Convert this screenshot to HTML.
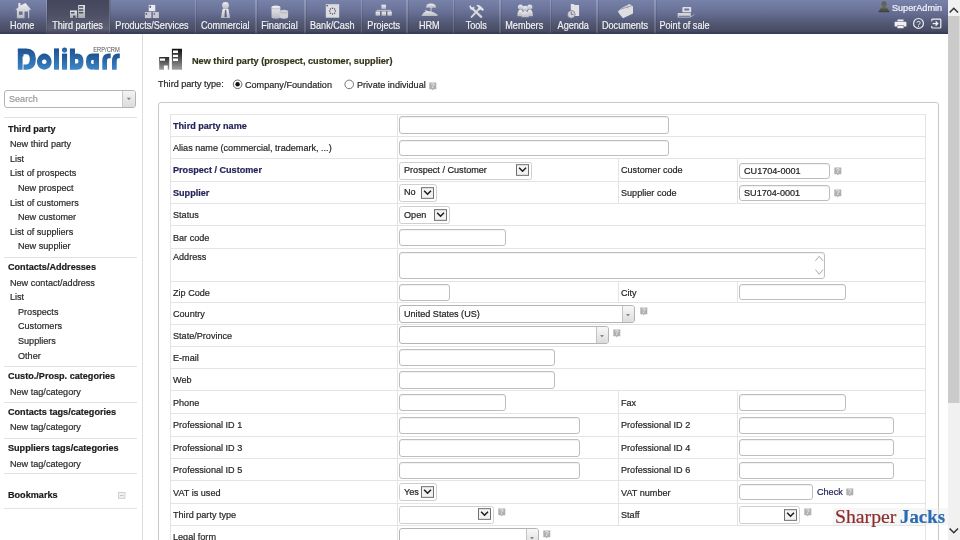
<!DOCTYPE html><html><head><meta charset="utf-8"><style>
html,body{margin:0;padding:0;width:960px;height:540px;overflow:hidden;background:#fff;}
body{position:relative;font-family:"Liberation Sans",sans-serif;color:#222;}
.t{position:absolute;white-space:nowrap;line-height:1;-webkit-text-stroke:0.2px currentColor;will-change:transform;transform:scaleY(1.05);}
.b{position:absolute;box-sizing:border-box;}
svg{position:absolute;overflow:visible;}
</style></head><body>
<div class="b" style="left:0px;top:0px;width:948.00px;height:33.60px;background:linear-gradient(#7882a8 0%,#687096 35%,#565c7a 62%,#4c5169 82%,#474c64 91%,#3c3f58 95%,#383b55 100%);"></div>
<div class="b" style="left:46.5px;top:0px;width:63.00px;height:33.60px;background:linear-gradient(#44475c 0%,#4e5166 45%,#5e6174 85%,#4a4c62 94%,#3c3e58 100%);"></div>
<div class="t" style="left:-0.8px;width:46.5px;text-align:center;top:21.50px;font-size:9.1px;color:#f4f4f8;transform-origin:0 7.70px;transform:scaleY(1.12);text-shadow:0 0.5px 0.8px rgba(0,0,0,0.45);">Home</div>
<div class="b" style="left:45.9px;top:0px;width:1.20px;height:33.00px;background:linear-gradient(rgba(255,255,255,0.2),rgba(255,255,255,0.14));"></div>
<div class="b" style="left:47.1px;top:0px;width:0.80px;height:33.00px;background:rgba(30,34,60,0.12);"></div>
<div class="t" style="left:45.7px;width:63.0px;text-align:center;top:21.50px;font-size:9.1px;color:#f4f4f8;transform-origin:0 7.70px;transform:scaleY(1.12);text-shadow:0 0.5px 0.8px rgba(0,0,0,0.45);">Third parties</div>
<div class="b" style="left:108.9px;top:0px;width:1.20px;height:33.00px;background:linear-gradient(rgba(255,255,255,0.2),rgba(255,255,255,0.14));"></div>
<div class="b" style="left:110.1px;top:0px;width:0.80px;height:33.00px;background:rgba(30,34,60,0.12);"></div>
<div class="t" style="left:108.7px;width:86.0px;text-align:center;top:21.50px;font-size:9.1px;color:#f4f4f8;transform-origin:0 7.70px;transform:scaleY(1.12);text-shadow:0 0.5px 0.8px rgba(0,0,0,0.45);">Products/Services</div>
<div class="b" style="left:194.9px;top:0px;width:1.20px;height:33.00px;background:linear-gradient(rgba(255,255,255,0.2),rgba(255,255,255,0.14));"></div>
<div class="b" style="left:196.1px;top:0px;width:0.80px;height:33.00px;background:rgba(30,34,60,0.12);"></div>
<div class="t" style="left:194.7px;width:60.5px;text-align:center;top:21.50px;font-size:9.1px;color:#f4f4f8;transform-origin:0 7.70px;transform:scaleY(1.12);text-shadow:0 0.5px 0.8px rgba(0,0,0,0.45);">Commercial</div>
<div class="b" style="left:255.4px;top:0px;width:1.20px;height:33.00px;background:linear-gradient(rgba(255,255,255,0.2),rgba(255,255,255,0.14));"></div>
<div class="b" style="left:256.6px;top:0px;width:0.80px;height:33.00px;background:rgba(30,34,60,0.12);"></div>
<div class="t" style="left:255.2px;width:49px;text-align:center;top:21.50px;font-size:9.1px;color:#f4f4f8;transform-origin:0 7.70px;transform:scaleY(1.12);text-shadow:0 0.5px 0.8px rgba(0,0,0,0.45);">Financial</div>
<div class="b" style="left:304.4px;top:0px;width:1.20px;height:33.00px;background:linear-gradient(rgba(255,255,255,0.2),rgba(255,255,255,0.14));"></div>
<div class="b" style="left:305.6px;top:0px;width:0.80px;height:33.00px;background:rgba(30,34,60,0.12);"></div>
<div class="t" style="left:304.2px;width:56.5px;text-align:center;top:21.50px;font-size:9.1px;color:#f4f4f8;transform-origin:0 7.70px;transform:scaleY(1.12);text-shadow:0 0.5px 0.8px rgba(0,0,0,0.45);">Bank/Cash</div>
<div class="b" style="left:360.9px;top:0px;width:1.20px;height:33.00px;background:linear-gradient(rgba(255,255,255,0.2),rgba(255,255,255,0.14));"></div>
<div class="b" style="left:362.1px;top:0px;width:0.80px;height:33.00px;background:rgba(30,34,60,0.12);"></div>
<div class="t" style="left:360.7px;width:45.5px;text-align:center;top:21.50px;font-size:9.1px;color:#f4f4f8;transform-origin:0 7.70px;transform:scaleY(1.12);text-shadow:0 0.5px 0.8px rgba(0,0,0,0.45);">Projects</div>
<div class="b" style="left:406.4px;top:0px;width:1.20px;height:33.00px;background:linear-gradient(rgba(255,255,255,0.2),rgba(255,255,255,0.14));"></div>
<div class="b" style="left:407.6px;top:0px;width:0.80px;height:33.00px;background:rgba(30,34,60,0.12);"></div>
<div class="t" style="left:406.2px;width:46.5px;text-align:center;top:21.50px;font-size:9.1px;color:#f4f4f8;transform-origin:0 7.70px;transform:scaleY(1.12);text-shadow:0 0.5px 0.8px rgba(0,0,0,0.45);">HRM</div>
<div class="b" style="left:452.9px;top:0px;width:1.20px;height:33.00px;background:linear-gradient(rgba(255,255,255,0.2),rgba(255,255,255,0.14));"></div>
<div class="b" style="left:454.1px;top:0px;width:0.80px;height:33.00px;background:rgba(30,34,60,0.12);"></div>
<div class="t" style="left:452.7px;width:46.5px;text-align:center;top:21.50px;font-size:9.1px;color:#f4f4f8;transform-origin:0 7.70px;transform:scaleY(1.12);text-shadow:0 0.5px 0.8px rgba(0,0,0,0.45);">Tools</div>
<div class="b" style="left:499.4px;top:0px;width:1.20px;height:33.00px;background:linear-gradient(rgba(255,255,255,0.2),rgba(255,255,255,0.14));"></div>
<div class="b" style="left:500.6px;top:0px;width:0.80px;height:33.00px;background:rgba(30,34,60,0.12);"></div>
<div class="t" style="left:499.2px;width:50.5px;text-align:center;top:21.50px;font-size:9.1px;color:#f4f4f8;transform-origin:0 7.70px;transform:scaleY(1.12);text-shadow:0 0.5px 0.8px rgba(0,0,0,0.45);">Members</div>
<div class="b" style="left:549.9px;top:0px;width:1.20px;height:33.00px;background:linear-gradient(rgba(255,255,255,0.2),rgba(255,255,255,0.14));"></div>
<div class="b" style="left:551.1px;top:0px;width:0.80px;height:33.00px;background:rgba(30,34,60,0.12);"></div>
<div class="t" style="left:549.7px;width:46.5px;text-align:center;top:21.50px;font-size:9.1px;color:#f4f4f8;transform-origin:0 7.70px;transform:scaleY(1.12);text-shadow:0 0.5px 0.8px rgba(0,0,0,0.45);">Agenda</div>
<div class="b" style="left:596.4px;top:0px;width:1.20px;height:33.00px;background:linear-gradient(rgba(255,255,255,0.2),rgba(255,255,255,0.14));"></div>
<div class="b" style="left:597.6px;top:0px;width:0.80px;height:33.00px;background:rgba(30,34,60,0.12);"></div>
<div class="t" style="left:596.2px;width:58px;text-align:center;top:21.50px;font-size:9.1px;color:#f4f4f8;transform-origin:0 7.70px;transform:scaleY(1.12);text-shadow:0 0.5px 0.8px rgba(0,0,0,0.45);">Documents</div>
<div class="b" style="left:654.4px;top:0px;width:1.20px;height:33.00px;background:linear-gradient(rgba(255,255,255,0.2),rgba(255,255,255,0.14));"></div>
<div class="b" style="left:655.6px;top:0px;width:0.80px;height:33.00px;background:rgba(30,34,60,0.12);"></div>
<div class="t" style="left:654.2px;width:61px;text-align:center;top:21.50px;font-size:9.1px;color:#f4f4f8;transform-origin:0 7.70px;transform:scaleY(1.12);text-shadow:0 0.5px 0.8px rgba(0,0,0,0.45);">Point of sale</div>
<div class="t " style="left:892px;top:3.50px;font-size:9.1px;transform-origin:0 7.70px;color:#f4f4f8;">SuperAdmin</div>
<div class="b" style="left:948px;top:0px;width:12.00px;height:540.00px;background:#f1f1f1;"></div>
<div class="b" style="left:948px;top:16px;width:10.60px;height:387.00px;background:#cbcbcb;"></div>
<div class="b" style="left:958.6px;top:16px;width:1.40px;height:387.00px;background:#dcdcdc;"></div>
<div class="b" style="left:141.6px;top:34px;width:1.00px;height:506.00px;background:#dcdcdc;"></div>
<div class="b" style="left:4px;top:90.3px;width:132.00px;height:17.40px;border:1px solid #b4b4b4;border-radius:3px;background:#fff;"></div>
<div class="b" style="left:122px;top:91.3px;width:13.00px;height:15.40px;background:linear-gradient(#f4f4f4,#dcdcdc);border-left:1px solid #c8c8c8;border-radius:0 2px 2px 0;"></div>
<div class="t " style="left:8.5px;top:94.80px;font-size:9.1px;transform-origin:0 7.70px;color:#9a9a9a;">Search</div>
<svg style="left:126px;top:97px" width="6" height="4"><path d="M0.8 0.8 L5 0.8 L2.9 3.2 Z" fill="#888"/></svg>
<div class="b" style="left:4px;top:117.0px;width:133.00px;height:1.00px;background:#e2e2e2;"></div>
<div class="b" style="left:4px;top:256.5px;width:133.00px;height:1.00px;background:#e2e2e2;"></div>
<div class="b" style="left:4px;top:366.2px;width:133.00px;height:1.00px;background:#e2e2e2;"></div>
<div class="b" style="left:4px;top:402.0px;width:133.00px;height:1.00px;background:#e2e2e2;"></div>
<div class="b" style="left:4px;top:437.5px;width:133.00px;height:1.00px;background:#e2e2e2;"></div>
<div class="b" style="left:4px;top:473.2px;width:133.00px;height:1.00px;background:#e2e2e2;"></div>
<div class="b" style="left:4px;top:508.0px;width:133.00px;height:1.00px;background:#e2e2e2;"></div>
<div class="t " style="left:8px;top:124.50px;font-size:9.1px;transform-origin:0 7.70px;color:#1a1a1a;font-weight:bold;">Third party</div>
<div class="t " style="left:10px;top:139.50px;font-size:9.1px;transform-origin:0 7.70px;color:#2a2a2a;">New third party</div>
<div class="t " style="left:10px;top:154.50px;font-size:9.1px;transform-origin:0 7.70px;color:#2a2a2a;">List</div>
<div class="t " style="left:10px;top:169.00px;font-size:9.1px;transform-origin:0 7.70px;color:#2a2a2a;">List of prospects</div>
<div class="t " style="left:18px;top:183.80px;font-size:9.1px;transform-origin:0 7.70px;color:#2a2a2a;">New prospect</div>
<div class="t " style="left:10px;top:198.60px;font-size:9.1px;transform-origin:0 7.70px;color:#2a2a2a;">List of customers</div>
<div class="t " style="left:18px;top:213.10px;font-size:9.1px;transform-origin:0 7.70px;color:#2a2a2a;">New customer</div>
<div class="t " style="left:10px;top:227.80px;font-size:9.1px;transform-origin:0 7.70px;color:#2a2a2a;">List of suppliers</div>
<div class="t " style="left:18px;top:242.30px;font-size:9.1px;transform-origin:0 7.70px;color:#2a2a2a;">New supplier</div>
<div class="t " style="left:7.5px;top:263.10px;font-size:9.1px;transform-origin:0 7.70px;color:#1a1a1a;font-weight:bold;">Contacts/Addresses</div>
<div class="t " style="left:10px;top:278.60px;font-size:9.1px;transform-origin:0 7.70px;color:#2a2a2a;">New contact/address</div>
<div class="t " style="left:10px;top:293.10px;font-size:9.1px;transform-origin:0 7.70px;color:#2a2a2a;">List</div>
<div class="t " style="left:18px;top:307.80px;font-size:9.1px;transform-origin:0 7.70px;color:#2a2a2a;">Prospects</div>
<div class="t " style="left:18px;top:322.30px;font-size:9.1px;transform-origin:0 7.70px;color:#2a2a2a;">Customers</div>
<div class="t " style="left:18px;top:337.00px;font-size:9.1px;transform-origin:0 7.70px;color:#2a2a2a;">Suppliers</div>
<div class="t " style="left:18px;top:351.50px;font-size:9.1px;transform-origin:0 7.70px;color:#2a2a2a;">Other</div>
<div class="t " style="left:7.5px;top:372.30px;font-size:9.1px;transform-origin:0 7.70px;color:#1a1a1a;font-weight:bold;">Custo./Prosp. categories</div>
<div class="t " style="left:10px;top:387.80px;font-size:9.1px;transform-origin:0 7.70px;color:#2a2a2a;">New tag/category</div>
<div class="t " style="left:7.5px;top:408.10px;font-size:9.1px;transform-origin:0 7.70px;color:#1a1a1a;font-weight:bold;">Contacts tags/categories</div>
<div class="t " style="left:10px;top:423.10px;font-size:9.1px;transform-origin:0 7.70px;color:#2a2a2a;">New tag/category</div>
<div class="t " style="left:7.5px;top:443.80px;font-size:9.1px;transform-origin:0 7.70px;color:#1a1a1a;font-weight:bold;">Suppliers tags/categories</div>
<div class="t " style="left:10px;top:459.70px;font-size:9.1px;transform-origin:0 7.70px;color:#2a2a2a;">New tag/category</div>
<div class="t " style="left:7.5px;top:490.60px;font-size:9.1px;transform-origin:0 7.70px;color:#1a1a1a;font-weight:bold;">Bookmarks</div>
<div class="t " style="left:191.9px;top:57.44px;font-size:9.17px;transform-origin:0 7.76px;color:#34341a;font-weight:bold;">New third party (prospect, customer, supplier)</div>
<div class="t " style="left:158px;top:80.30px;font-size:9.1px;transform-origin:0 7.70px;color:#262626;">Third party type:</div>
<div class="t " style="left:245.1px;top:80.70px;font-size:9.1px;transform-origin:0 7.70px;color:#262626;">Company/Foundation</div>
<div class="t " style="left:356.6px;top:80.80px;font-size:9.1px;transform-origin:0 7.70px;color:#262626;">Private individual</div>
<div class="b" style="left:157.5px;top:102.1px;width:781.60px;height:457.90px;border:1px solid #c8c8c8;border-radius:3px;"></div>
<div class="b" style="left:170.0px;top:113.7px;width:755.80px;height:1.00px;background:#e4e4e4;"></div>
<div class="b" style="left:170.0px;top:135.9px;width:755.80px;height:1.00px;background:#e4e4e4;"></div>
<div class="b" style="left:170.0px;top:158.1px;width:755.80px;height:1.00px;background:#e4e4e4;"></div>
<div class="b" style="left:170.0px;top:180.5px;width:755.80px;height:1.00px;background:#e4e4e4;"></div>
<div class="b" style="left:170.0px;top:203.0px;width:755.80px;height:1.00px;background:#e4e4e4;"></div>
<div class="b" style="left:170.0px;top:225.3px;width:755.80px;height:1.00px;background:#e4e4e4;"></div>
<div class="b" style="left:170.0px;top:248.0px;width:755.80px;height:1.00px;background:#e4e4e4;"></div>
<div class="b" style="left:170.0px;top:281.2px;width:755.80px;height:1.00px;background:#e4e4e4;"></div>
<div class="b" style="left:170.0px;top:302.2px;width:755.80px;height:1.00px;background:#e4e4e4;"></div>
<div class="b" style="left:170.0px;top:323.9px;width:755.80px;height:1.00px;background:#e4e4e4;"></div>
<div class="b" style="left:170.0px;top:346.0px;width:755.80px;height:1.00px;background:#e4e4e4;"></div>
<div class="b" style="left:170.0px;top:367.9px;width:755.80px;height:1.00px;background:#e4e4e4;"></div>
<div class="b" style="left:170.0px;top:390.2px;width:755.80px;height:1.00px;background:#e4e4e4;"></div>
<div class="b" style="left:170.0px;top:412.6px;width:755.80px;height:1.00px;background:#e4e4e4;"></div>
<div class="b" style="left:170.0px;top:435.5px;width:755.80px;height:1.00px;background:#e4e4e4;"></div>
<div class="b" style="left:170.0px;top:458.2px;width:755.80px;height:1.00px;background:#e4e4e4;"></div>
<div class="b" style="left:170.0px;top:480.4px;width:755.80px;height:1.00px;background:#e4e4e4;"></div>
<div class="b" style="left:170.0px;top:502.5px;width:755.80px;height:1.00px;background:#e4e4e4;"></div>
<div class="b" style="left:170.0px;top:524.8px;width:755.80px;height:1.00px;background:#e4e4e4;"></div>
<div class="b" style="left:170.0px;top:113.7px;width:1.00px;height:426.30px;background:#e4e4e4;"></div>
<div class="b" style="left:924.8px;top:113.7px;width:1.00px;height:426.30px;background:#e4e4e4;"></div>
<div class="b" style="left:396.5px;top:114.2px;width:1.00px;height:425.80px;background:#e4e4e4;"></div>
<div class="b" style="left:617.5px;top:158.6px;width:1.00px;height:22.40px;background:#e4e4e4;"></div>
<div class="b" style="left:736.5px;top:158.6px;width:1.00px;height:22.40px;background:#e4e4e4;"></div>
<div class="b" style="left:617.5px;top:181.0px;width:1.00px;height:22.50px;background:#e4e4e4;"></div>
<div class="b" style="left:736.5px;top:181.0px;width:1.00px;height:22.50px;background:#e4e4e4;"></div>
<div class="b" style="left:617.5px;top:281.7px;width:1.00px;height:21.00px;background:#e4e4e4;"></div>
<div class="b" style="left:736.5px;top:281.7px;width:1.00px;height:21.00px;background:#e4e4e4;"></div>
<div class="b" style="left:617.5px;top:390.7px;width:1.00px;height:22.40px;background:#e4e4e4;"></div>
<div class="b" style="left:736.5px;top:390.7px;width:1.00px;height:22.40px;background:#e4e4e4;"></div>
<div class="b" style="left:617.5px;top:413.1px;width:1.00px;height:22.90px;background:#e4e4e4;"></div>
<div class="b" style="left:736.5px;top:413.1px;width:1.00px;height:22.90px;background:#e4e4e4;"></div>
<div class="b" style="left:617.5px;top:436.0px;width:1.00px;height:22.70px;background:#e4e4e4;"></div>
<div class="b" style="left:736.5px;top:436.0px;width:1.00px;height:22.70px;background:#e4e4e4;"></div>
<div class="b" style="left:617.5px;top:458.7px;width:1.00px;height:22.20px;background:#e4e4e4;"></div>
<div class="b" style="left:736.5px;top:458.7px;width:1.00px;height:22.20px;background:#e4e4e4;"></div>
<div class="b" style="left:617.5px;top:480.9px;width:1.00px;height:22.10px;background:#e4e4e4;"></div>
<div class="b" style="left:736.5px;top:480.9px;width:1.00px;height:22.10px;background:#e4e4e4;"></div>
<div class="b" style="left:617.5px;top:503.0px;width:1.00px;height:22.30px;background:#e4e4e4;"></div>
<div class="b" style="left:736.5px;top:503.0px;width:1.00px;height:22.30px;background:#e4e4e4;"></div>
<div class="t " style="left:172.6px;top:121.90px;font-size:9.1px;transform-origin:0 7.70px;color:#24245a;font-weight:bold;">Third party name</div>
<div class="t " style="left:172.6px;top:144.10px;font-size:9.1px;transform-origin:0 7.70px;color:#262626;">Alias name (commercial, trademark, ...)</div>
<div class="t " style="left:172.6px;top:166.40px;font-size:9.1px;transform-origin:0 7.70px;color:#24245a;font-weight:bold;">Prospect / Customer</div>
<div class="t " style="left:172.6px;top:188.85px;font-size:9.1px;transform-origin:0 7.70px;color:#24245a;font-weight:bold;">Supplier</div>
<div class="t " style="left:172.6px;top:211.25px;font-size:9.1px;transform-origin:0 7.70px;color:#262626;">Status</div>
<div class="t " style="left:172.6px;top:233.75px;font-size:9.1px;transform-origin:0 7.70px;color:#262626;">Bar code</div>
<div class="t " style="left:172.6px;top:252.70px;font-size:9.1px;transform-origin:0 7.70px;color:#262626;">Address</div>
<div class="t " style="left:172.6px;top:288.80px;font-size:9.1px;transform-origin:0 7.70px;color:#262626;">Zip Code</div>
<div class="t " style="left:172.6px;top:310.15px;font-size:9.1px;transform-origin:0 7.70px;color:#262626;">Country</div>
<div class="t " style="left:172.6px;top:332.05px;font-size:9.1px;transform-origin:0 7.70px;color:#262626;">State/Province</div>
<div class="t " style="left:172.6px;top:354.05px;font-size:9.1px;transform-origin:0 7.70px;color:#262626;">E-mail</div>
<div class="t " style="left:172.6px;top:376.15px;font-size:9.1px;transform-origin:0 7.70px;color:#262626;">Web</div>
<div class="t " style="left:172.6px;top:398.50px;font-size:9.1px;transform-origin:0 7.70px;color:#262626;">Phone</div>
<div class="t " style="left:172.6px;top:421.15px;font-size:9.1px;transform-origin:0 7.70px;color:#262626;">Professional ID 1</div>
<div class="t " style="left:172.6px;top:443.95px;font-size:9.1px;transform-origin:0 7.70px;color:#262626;">Professional ID 3</div>
<div class="t " style="left:172.6px;top:466.40px;font-size:9.1px;transform-origin:0 7.70px;color:#262626;">Professional ID 5</div>
<div class="t " style="left:172.6px;top:488.55px;font-size:9.1px;transform-origin:0 7.70px;color:#262626;">VAT is used</div>
<div class="t " style="left:172.6px;top:510.75px;font-size:9.1px;transform-origin:0 7.70px;color:#262626;">Third party type</div>
<div class="t " style="left:172.6px;top:533.00px;font-size:9.1px;transform-origin:0 7.70px;color:#262626;">Legal form</div>
<div class="t " style="left:620.6px;top:166.40px;font-size:9.1px;transform-origin:0 7.70px;color:#262626;">Customer code</div>
<div class="t " style="left:620.6px;top:188.85px;font-size:9.1px;transform-origin:0 7.70px;color:#262626;">Supplier code</div>
<div class="t " style="left:620.6px;top:288.80px;font-size:9.1px;transform-origin:0 7.70px;color:#262626;">City</div>
<div class="t " style="left:620.6px;top:398.50px;font-size:9.1px;transform-origin:0 7.70px;color:#262626;">Fax</div>
<div class="t " style="left:620.6px;top:421.15px;font-size:9.1px;transform-origin:0 7.70px;color:#262626;">Professional ID 2</div>
<div class="t " style="left:620.6px;top:443.95px;font-size:9.1px;transform-origin:0 7.70px;color:#262626;">Professional ID 4</div>
<div class="t " style="left:620.6px;top:466.40px;font-size:9.1px;transform-origin:0 7.70px;color:#262626;">Professional ID 6</div>
<div class="t " style="left:620.6px;top:488.55px;font-size:9.1px;transform-origin:0 7.70px;color:#262626;">VAT number</div>
<div class="t " style="left:620.6px;top:510.75px;font-size:9.1px;transform-origin:0 7.70px;color:#262626;">Staff</div>
<div class="b" style="left:399.2px;top:116.3px;width:270.00px;height:17.40px;border:1.2px solid #bdbdbd;border-radius:3px;background:#fff;box-shadow:inset 0 1px 1px rgba(0,0,0,0.06);"></div>
<div class="b" style="left:399.2px;top:139.6px;width:270.00px;height:16.90px;border:1.2px solid #bdbdbd;border-radius:3px;background:#fff;box-shadow:inset 0 1px 1px rgba(0,0,0,0.06);"></div>
<div class="b" style="left:399.4px;top:161.6px;width:133.10px;height:18.10px;border:1px solid #cfcfcf;border-radius:2.5px;background:#fff;"></div>
<div class="t " style="left:404.0px;top:166.40px;font-size:9.1px;transform-origin:0 7.70px;color:#222;">Prospect / Customer</div>
<svg style="left:516.1px;top:164.30px" width="13" height="12" viewBox="0 0 12.9 11.6"><rect x="0.5" y="0.5" width="11.9" height="10.6" fill="#f3f3f3" stroke="#707070" stroke-width="1"/><path d="M3.1 3.6 L6.5 7 L9.9 3.6" fill="none" stroke="#1a1a1a" stroke-width="1.45"/></svg>
<div class="b" style="left:739.4px;top:162.5px;width:90.60px;height:16.30px;border:1.2px solid #bdbdbd;border-radius:3px;background:#fff;box-shadow:inset 0 1px 1px rgba(0,0,0,0.06);"></div>
<div class="t " style="left:743.5px;top:166.50px;font-size:9.1px;transform-origin:0 7.70px;color:#222;">CU1704-0001</div>
<svg style="left:834px;top:166.70000000000002px" width="8" height="9" viewBox="0 0 8 9"><path d="M0.3 0.5 L7.3 0.5 L7.3 7.3 L4.6 7.3 L3.8 8.6 L3 7.3 L0.3 7.3 Z" fill="#b0b0b0"/><text x="3.8" y="6.3" font-size="6.8" font-weight="bold" text-anchor="middle" fill="#e8e8e8" font-family="Liberation Sans">?</text></svg>
<div class="b" style="left:399.4px;top:183.9px;width:38.10px;height:17.70px;border:1px solid #cfcfcf;border-radius:2.5px;background:#fff;"></div>
<div class="t " style="left:404.0px;top:188.30px;font-size:9.1px;transform-origin:0 7.70px;color:#222;">No</div>
<svg style="left:421.2px;top:186.60px" width="13" height="12" viewBox="0 0 12.9 11.6"><rect x="0.5" y="0.5" width="11.9" height="10.6" fill="#f3f3f3" stroke="#707070" stroke-width="1"/><path d="M3.1 3.6 L6.5 7 L9.9 3.6" fill="none" stroke="#1a1a1a" stroke-width="1.45"/></svg>
<div class="b" style="left:739.4px;top:184.8px;width:90.60px;height:16.40px;border:1.2px solid #bdbdbd;border-radius:3px;background:#fff;box-shadow:inset 0 1px 1px rgba(0,0,0,0.06);"></div>
<div class="t " style="left:743.5px;top:188.70px;font-size:9.1px;transform-origin:0 7.70px;color:#222;">SU1704-0001</div>
<svg style="left:834px;top:188.9px" width="8" height="9" viewBox="0 0 8 9"><path d="M0.3 0.5 L7.3 0.5 L7.3 7.3 L4.6 7.3 L3.8 8.6 L3 7.3 L0.3 7.3 Z" fill="#b0b0b0"/><text x="3.8" y="6.3" font-size="6.8" font-weight="bold" text-anchor="middle" fill="#e8e8e8" font-family="Liberation Sans">?</text></svg>
<div class="b" style="left:399.4px;top:206.2px;width:51.10px;height:17.80px;border:1px solid #cfcfcf;border-radius:2.5px;background:#fff;"></div>
<div class="t " style="left:404.0px;top:210.70px;font-size:9.1px;transform-origin:0 7.70px;color:#222;">Open</div>
<svg style="left:434px;top:208.90px" width="13" height="12" viewBox="0 0 12.9 11.6"><rect x="0.5" y="0.5" width="11.9" height="10.6" fill="#f3f3f3" stroke="#707070" stroke-width="1"/><path d="M3.1 3.6 L6.5 7 L9.9 3.6" fill="none" stroke="#1a1a1a" stroke-width="1.45"/></svg>
<div class="b" style="left:399.2px;top:229px;width:107.30px;height:17.10px;border:1.2px solid #bdbdbd;border-radius:3px;background:#fff;box-shadow:inset 0 1px 1px rgba(0,0,0,0.06);"></div>
<div class="b" style="left:399.2px;top:251.6px;width:426.30px;height:27.10px;border:1.2px solid #bdbdbd;border-radius:3px;background:#fff;box-shadow:inset 0 1px 1px rgba(0,0,0,0.06);"></div>
<svg style="left:814px;top:252px" width="10" height="26" viewBox="0 0 10 26"><path d="M1.4 8.8 L5.2 4.3 L9 8.8" fill="none" stroke="#a8a8a8" stroke-width="1"/><path d="M1.4 17.6 L5.2 22.3 L9 17.6" fill="none" stroke="#a8a8a8" stroke-width="1"/></svg>
<div class="b" style="left:399.2px;top:283.8px;width:51.10px;height:16.90px;border:1.2px solid #bdbdbd;border-radius:3px;background:#fff;box-shadow:inset 0 1px 1px rgba(0,0,0,0.06);"></div>
<div class="b" style="left:739.4px;top:283.6px;width:106.90px;height:16.90px;border:1.2px solid #bdbdbd;border-radius:3px;background:#fff;box-shadow:inset 0 1px 1px rgba(0,0,0,0.06);"></div>
<div class="b" style="left:398.9px;top:304.7px;width:236.20px;height:18.00px;border:1.1px solid #b4b4b4;border-radius:3px;background:#fff;"></div>
<div class="b" style="left:621.8000000000001px;top:305.7px;width:12.30px;height:16.00px;background:linear-gradient(#f8f8f8,#dcdcdc);border-left:1px solid #c4c4c4;border-radius:0 2px 2px 0;"></div>
<svg style="left:625.1px;top:312.7px" width="6" height="4"><path d="M1 1 L5 1 L3 3.4 Z" fill="#888"/></svg>
<div class="t " style="left:403.59999999999997px;top:309.70px;font-size:9.1px;transform-origin:0 7.70px;color:#222;">United States (US)</div>
<svg style="left:639.8px;top:306.90000000000003px" width="8" height="9" viewBox="0 0 8 9"><path d="M0.3 0.5 L7.3 0.5 L7.3 7.3 L4.6 7.3 L3.8 8.6 L3 7.3 L0.3 7.3 Z" fill="#b0b0b0"/><text x="3.8" y="6.3" font-size="6.8" font-weight="bold" text-anchor="middle" fill="#e8e8e8" font-family="Liberation Sans">?</text></svg>
<div class="b" style="left:398.9px;top:326px;width:210.40px;height:17.80px;border:1.1px solid #b4b4b4;border-radius:3px;background:#fff;"></div>
<div class="b" style="left:596.0px;top:327px;width:12.30px;height:15.80px;background:linear-gradient(#f8f8f8,#dcdcdc);border-left:1px solid #c4c4c4;border-radius:0 2px 2px 0;"></div>
<svg style="left:599.3px;top:333.9px" width="6" height="4"><path d="M1 1 L5 1 L3 3.4 Z" fill="#888"/></svg>
<svg style="left:613.4px;top:329.1px" width="8" height="9" viewBox="0 0 8 9"><path d="M0.3 0.5 L7.3 0.5 L7.3 7.3 L4.6 7.3 L3.8 8.6 L3 7.3 L0.3 7.3 Z" fill="#b0b0b0"/><text x="3.8" y="6.3" font-size="6.8" font-weight="bold" text-anchor="middle" fill="#e8e8e8" font-family="Liberation Sans">?</text></svg>
<div class="b" style="left:399.2px;top:348.5px;width:156.10px;height:17.50px;border:1.2px solid #bdbdbd;border-radius:3px;background:#fff;box-shadow:inset 0 1px 1px rgba(0,0,0,0.06);"></div>
<div class="b" style="left:399.2px;top:371px;width:156.10px;height:17.50px;border:1.2px solid #bdbdbd;border-radius:3px;background:#fff;box-shadow:inset 0 1px 1px rgba(0,0,0,0.06);"></div>
<div class="b" style="left:399.2px;top:394.2px;width:107.20px;height:16.70px;border:1.2px solid #bdbdbd;border-radius:3px;background:#fff;box-shadow:inset 0 1px 1px rgba(0,0,0,0.06);"></div>
<div class="b" style="left:739.4px;top:394px;width:106.60px;height:17.10px;border:1.2px solid #bdbdbd;border-radius:3px;background:#fff;box-shadow:inset 0 1px 1px rgba(0,0,0,0.06);"></div>
<div class="b" style="left:399.2px;top:416.6px;width:180.60px;height:17.50px;border:1.2px solid #bdbdbd;border-radius:3px;background:#fff;box-shadow:inset 0 1px 1px rgba(0,0,0,0.06);"></div>
<div class="b" style="left:739.4px;top:416.7px;width:154.30px;height:16.90px;border:1.2px solid #bdbdbd;border-radius:3px;background:#fff;box-shadow:inset 0 1px 1px rgba(0,0,0,0.06);"></div>
<div class="b" style="left:399.2px;top:439px;width:180.60px;height:17.60px;border:1.2px solid #bdbdbd;border-radius:3px;background:#fff;box-shadow:inset 0 1px 1px rgba(0,0,0,0.06);"></div>
<div class="b" style="left:739.4px;top:439.2px;width:154.30px;height:17.00px;border:1.2px solid #bdbdbd;border-radius:3px;background:#fff;box-shadow:inset 0 1px 1px rgba(0,0,0,0.06);"></div>
<div class="b" style="left:399.2px;top:461.5px;width:180.60px;height:17.50px;border:1.2px solid #bdbdbd;border-radius:3px;background:#fff;box-shadow:inset 0 1px 1px rgba(0,0,0,0.06);"></div>
<div class="b" style="left:739.4px;top:461.6px;width:154.30px;height:17.10px;border:1.2px solid #bdbdbd;border-radius:3px;background:#fff;box-shadow:inset 0 1px 1px rgba(0,0,0,0.06);"></div>
<div class="b" style="left:399.4px;top:483px;width:37.80px;height:18.40px;border:1px solid #cfcfcf;border-radius:2.5px;background:#fff;"></div>
<div class="t " style="left:404.0px;top:488.10px;font-size:9.1px;transform-origin:0 7.70px;color:#222;">Yes</div>
<svg style="left:421px;top:485.70px" width="13" height="12" viewBox="0 0 12.9 11.6"><rect x="0.5" y="0.5" width="11.9" height="10.6" fill="#f3f3f3" stroke="#707070" stroke-width="1"/><path d="M3.1 3.6 L6.5 7 L9.9 3.6" fill="none" stroke="#1a1a1a" stroke-width="1.45"/></svg>
<div class="b" style="left:739.4px;top:483.7px;width:73.90px;height:16.70px;border:1.2px solid #bdbdbd;border-radius:3px;background:#fff;box-shadow:inset 0 1px 1px rgba(0,0,0,0.06);"></div>
<div class="t " style="left:817px;top:487.80px;font-size:9.1px;transform-origin:0 7.70px;color:#24245a;">Check</div>
<svg style="left:845.6px;top:487.7px" width="8" height="9" viewBox="0 0 8 9"><path d="M0.3 0.5 L7.3 0.5 L7.3 7.3 L4.6 7.3 L3.8 8.6 L3 7.3 L0.3 7.3 Z" fill="#b0b0b0"/><text x="3.8" y="6.3" font-size="6.8" font-weight="bold" text-anchor="middle" fill="#e8e8e8" font-family="Liberation Sans">?</text></svg>
<div class="b" style="left:399.4px;top:505.5px;width:94.70px;height:18.30px;border:1px solid #cfcfcf;border-radius:2.5px;background:#fff;"></div>
<svg style="left:477.5px;top:508.20px" width="13" height="12" viewBox="0 0 12.9 11.6"><rect x="0.5" y="0.5" width="11.9" height="10.6" fill="#f3f3f3" stroke="#707070" stroke-width="1"/><path d="M3.1 3.6 L6.5 7 L9.9 3.6" fill="none" stroke="#1a1a1a" stroke-width="1.45"/></svg>
<svg style="left:498px;top:507.90000000000003px" width="8" height="9" viewBox="0 0 8 9"><path d="M0.3 0.5 L7.3 0.5 L7.3 7.3 L4.6 7.3 L3.8 8.6 L3 7.3 L0.3 7.3 Z" fill="#b0b0b0"/><text x="3.8" y="6.3" font-size="6.8" font-weight="bold" text-anchor="middle" fill="#e8e8e8" font-family="Liberation Sans">?</text></svg>
<div class="b" style="left:739.4px;top:506px;width:60.20px;height:18.00px;border:1px solid #cfcfcf;border-radius:2.5px;background:#fff;"></div>
<svg style="left:783.5px;top:508.70px" width="13" height="12" viewBox="0 0 12.9 11.6"><rect x="0.5" y="0.5" width="11.9" height="10.6" fill="#f3f3f3" stroke="#707070" stroke-width="1"/><path d="M3.1 3.6 L6.5 7 L9.9 3.6" fill="none" stroke="#1a1a1a" stroke-width="1.45"/></svg>
<svg style="left:803.8px;top:508.3px" width="8" height="9" viewBox="0 0 8 9"><path d="M0.3 0.5 L7.3 0.5 L7.3 7.3 L4.6 7.3 L3.8 8.6 L3 7.3 L0.3 7.3 Z" fill="#b0b0b0"/><text x="3.8" y="6.3" font-size="6.8" font-weight="bold" text-anchor="middle" fill="#e8e8e8" font-family="Liberation Sans">?</text></svg>
<div class="b" style="left:398.9px;top:527.9px;width:140.10px;height:18.10px;border:1.1px solid #b4b4b4;border-radius:3px;background:#fff;"></div>
<div class="b" style="left:525.7px;top:528.9px;width:12.30px;height:16.10px;background:linear-gradient(#f8f8f8,#dcdcdc);border-left:1px solid #c4c4c4;border-radius:0 2px 2px 0;"></div>
<svg style="left:529px;top:535.95px" width="6" height="4"><path d="M1 1 L5 1 L3 3.4 Z" fill="#888"/></svg>
<svg style="left:543px;top:530.0999999999999px" width="8" height="9" viewBox="0 0 8 9"><path d="M0.3 0.5 L7.3 0.5 L7.3 7.3 L4.6 7.3 L3.8 8.6 L3 7.3 L0.3 7.3 Z" fill="#b0b0b0"/><text x="3.8" y="6.3" font-size="6.8" font-weight="bold" text-anchor="middle" fill="#e8e8e8" font-family="Liberation Sans">?</text></svg>
<div class="b" style="left:832.5px;top:507.5px;width:115.50px;height:17.70px;background:rgba(236,236,236,0.45);"></div>
<div class="t" style="left:835.2px;top:507.6px;font-family:'Liberation Serif',serif;font-size:18.6px;color:#8e2c2c;transform:scaleX(1.06);transform-origin:0 0;-webkit-text-stroke:0.2px currentColor;">Sharper</div>
<div class="t" style="left:900px;top:507.6px;font-family:'Liberation Serif',serif;font-weight:bold;font-size:18.6px;color:#2c6cb4;transform:scaleX(1.015);transform-origin:0 0;">Jacks</div>
<svg style="left:0;top:0" width="948" height="34" viewBox="0 0 948 34"><defs><linearGradient id="ig" x1="0" y1="0" x2="0" y2="1"><stop offset="0" stop-color="#f0f0f2"/><stop offset="1" stop-color="#b8b9c0"/></linearGradient><linearGradient id="ig2" x1="0" y1="0" x2="0" y2="1"><stop offset="0" stop-color="#e6e6e8"/><stop offset="1" stop-color="#a8a8b0"/></linearGradient></defs><g fill="url(#ig)"><path d="M15.3 9.8 L18.4 7.2 L18.4 3.1 L20.4 3.1 L20.4 5.6 L25.5 2.9 L31.2 9.8 L29.2 9.8 L29.2 18.2 L16.9 18.2 L16.9 9.8 Z M19 11.4 V14.7 H22.6 V11.4 Z M24.5 11.4 V18.2 H28 V11.4 Z" fill-rule="evenodd"/><path d="M70 10.5 H77 V18 H70 Z M71 12 V13.5 H74.5 V12 Z M73 15.5 V18 H75.5 V15.5 Z" fill-rule="evenodd" fill="url(#ig2)"/><path d="M78.2 5 H85 V18 H78.2 Z M79 6.3 V7.8 H83.2 V6.3 Z M79 9.2 V10.7 H83.2 V9.2 Z M79 12 V13.5 H83.2 V12 Z" fill-rule="evenodd" fill="url(#ig2)"/><rect x="148.75" y="4.9" width="6.5" height="6.3" fill="#ececf0"/><rect x="144.9" y="12" width="6.5" height="6.1" fill="#c8c8d0"/><rect x="152.8" y="12" width="6.1" height="6.1" fill="#c8c8d0"/><rect x="149.6" y="5.8" width="1.4" height="2" fill="#50566e"/><rect x="145.7" y="12.9" width="1.4" height="2" fill="#60667e"/><rect x="153.6" y="12.9" width="1.2" height="2" fill="#60667e"/><circle cx="225.5" cy="5.4" r="3.4"/><path d="M222.6 8.8 L228.4 8.8 L230.1 18 L220.9 18 Z"/><path d="M225 9.8 L226.2 9.8 L226.9 17.2 L224.4 17.2 Z" fill="#5c6280"/><path d="M271.5 7.3 A4.4 1.7 0 0 1 280.3 7.3 V17 A4.4 1.7 0 0 1 271.5 17 Z"/><path d="M271.5 7.3 A4.4 1.7 0 0 0 280.3 7.3" fill="none" stroke="#9a9cac" stroke-width="0.5"/><path d="M279.8 11.4 A4.15 1.6 0 0 1 288.1 11.4 V17.1 A4.15 1.6 0 0 1 279.8 17.1 Z" fill="#d0d0d6"/><path d="M279.8 11.4 A4.15 1.6 0 0 0 288.1 11.4" fill="none" stroke="#9a9cac" stroke-width="0.5"/><rect x="325.8" y="4.2" width="13.4" height="13.5" fill="#dcdce0"/><rect x="326.5" y="5" width="1.3" height="1.3" fill="#40445a"/><g fill="#50546a"><circle cx="332.5" cy="8.2" r="0.75"/><circle cx="332.5" cy="14" r="0.75"/><circle cx="329.6" cy="11.1" r="0.75"/><circle cx="335.4" cy="11.1" r="0.75"/><circle cx="330.45" cy="9.05" r="0.75"/><circle cx="334.55" cy="9.05" r="0.75"/><circle cx="330.45" cy="13.15" r="0.75"/><circle cx="334.55" cy="13.15" r="0.75"/></g><rect x="381.4" y="4.7" width="4.6" height="4.2"/><rect x="376.5" y="9.9" width="14.5" height="0.9"/><rect x="375.6" y="11.5" width="4.4" height="4.2"/><rect x="381.6" y="11.5" width="4.4" height="4.2"/><rect x="387.4" y="11.5" width="4.4" height="4.2"/><path d="M426 7.8 Q426 3.6 431 3.6 Q436 3.6 436 7.8 Z"/><rect x="430.6" y="7" width="0.9" height="5"/><path d="M421.5 16.1 Q423 12 426 11.5 L424.5 9.9 L428 11 Q434 11.5 438 15 L437 16.1 Z"/><g stroke="#d6d6dc" stroke-linecap="round" fill="none"><path d="M472.5 8.6 L481.2 16.8" stroke-width="2.3"/><path d="M479.6 8.4 L471.6 16.9" stroke-width="2"/></g><path d="M469.3 6.2 L470.8 4.9 L471.2 7.1 L472.5 7.6 L474.2 6.4 L474.4 8.2 L473 9.8 L470.5 9.6 Z" fill="#e4e4e8"/><path d="M476.3 5.6 L477.8 4.7 Q480.5 5.2 484 9.6 L482.6 11 L480.8 9.6 L479.6 10.2 L477.8 8.4 L478.6 7.4 Z" fill="#e4e4e8"/><circle cx="520.5" cy="7" r="2.6"/><circle cx="529.8" cy="7" r="2.6"/><path d="M517.3 16.3 Q517.3 10 520.5 9.6 Q523.5 10 523.5 16.3 Z M526.8 16.3 Q526.8 10 529.8 9.6 Q533 10 533 16.3 Z"/><circle cx="525.1" cy="8.5" r="2.8"/><path d="M521.5 17.2 Q521.5 11.5 525.1 11 Q528.8 11.5 528.8 17.2 Z"/><path d="M570.8 3.9 H573.8 L574.4 5 H579.1 V15.9 H570.8 Z" fill="#e2e2e6"/><circle cx="571.3" cy="14.3" r="3.9" fill="#cfcfd4" stroke="#50546c" stroke-width="0.5"/><path d="M571.3 11.5 V14.4 H573.6" fill="none" stroke="#5a5e74" stroke-width="0.7"/><path d="M617.9 11.5 L621.3 8.2 L629.6 4 L631.6 5.6 L633 6.6 L633 13.6 L623 18.2 L619.8 14.6 Z" fill="#dedee2"/><path d="M620.5 9.2 L631.5 5.8 M627.2 6.5 L628 8.2" fill="none" stroke="#70748a" stroke-width="0.6"/><path d="M682.4 7.6 Q682.4 6.9 683.2 6.9 H690.4 Q691.2 6.9 691.2 7.6 V12.2 H682.4 Z M684.3 8.5 V10.6 H689.2 V8.5 Z" fill="#e0e0e4" fill-rule="evenodd"/><path d="M677.7 13 H690.8 V17.5 H677.7 Z M678.6 15.8 V16.7 H690 V15.8 Z" fill="#d4d4da" fill-rule="evenodd"/><path d="M690.8 16.6 Q693 16.2 694.5 14.3" fill="none" stroke="#c8c8d0" stroke-width="0.7"/></g></svg>
<svg style="left:876px;top:0" width="70" height="33" viewBox="876 0 70 33"><defs><linearGradient id="ug" x1="0" y1="0" x2="0" y2="1"><stop offset="0" stop-color="#585c56"/><stop offset="0.5" stop-color="#6a6c58"/><stop offset="1" stop-color="#3a3e34"/></linearGradient></defs><path d="M884 1.3 Q886.6 1.5 886.6 4.2 Q886.6 6.2 885.4 7 Q887.8 8 888.3 10 L889.3 10.6 V12.2 H878.7 V10.6 L879.7 10 Q880.2 8 882.6 7 Q881.4 6.2 881.4 4.2 Q881.4 1.5 884 1.3 Z" fill="url(#ug)"/><g fill="#f0f0f4"><path d="M897.5 19.5 H903.5 V21.2 H897.5 Z M895.2 21.8 H905.8 Q906.4 21.8 906.4 22.5 V26.6 H904 V25.5 H897 V26.6 H894.6 V22.5 Q894.6 21.8 895.2 21.8 Z M897.4 26 H903.6 V28.3 H897.4 Z"/></g><circle cx="918.5" cy="23.4" r="4.9" fill="none" stroke="#f0f0f4" stroke-width="1.2"/><text x="918.5" y="26.6" font-size="8.2" text-anchor="middle" fill="#f0f0f4" font-family="Liberation Sans">?</text><path d="M931.8 21.3 V20 Q931.8 19.2 932.6 19.2 H940 Q940.8 19.2 940.8 20 V27.2 Q940.8 28 940 28 H932.6 Q931.8 28 931.8 27.2 V25.9" fill="none" stroke="#f0f0f4" stroke-width="1.2"/><path d="M932.6 23.6 H937.6 M935.6 21.5 L937.7 23.6 L935.6 25.7" fill="none" stroke="#f0f0f4" stroke-width="1.3"/></svg>
<svg style="left:948px;top:0" width="12" height="540" viewBox="0 0 12 540"><path d="M1.6 12.6 L5.8 8.3 L10 12.6" fill="none" stroke="#333" stroke-width="1.5"/><path d="M1.6 528.5 L5.8 532.8 L10 528.5" fill="none" stroke="#333" stroke-width="1.5"/></svg>
<svg style="left:0;top:40px" width="140" height="36" viewBox="0 40 140 36"><defs><linearGradient id="lg" x1="0" y1="0" x2="0" y2="1"><stop offset="0" stop-color="#1c5290"/><stop offset="1" stop-color="#3d86c8"/></linearGradient></defs><g fill="url(#lg)"><path d="M17.8 48.4 H26.5 Q35.9 48.4 35.9 59.05 Q35.9 69.7 26.5 69.7 H23.5 V56.5 H22.6 V69.7 H17.8 Z M23.5 54.2 V64.4 H26.6 Q29.8 64.4 29.8 59.3 Q29.8 54.2 26.6 54.2 Z" fill-rule="evenodd"/><path d="M44.3 53.6 A7.3 8.05 0 1 1 44.29 53.6 Z M44.25 59.45 A2.3 2.3 0 1 0 44.26 59.45 Z" fill-rule="evenodd"/><rect x="54" y="48.4" width="5" height="21.3"/><circle cx="64.55" cy="50.1" r="2.6"/><rect x="62" y="53.6" width="5.1" height="16.1"/><path d="M69.9 48.4 H75 V53.9 Q75.8 53.6 76.8 53.6 Q83.5 53.6 83.5 61.65 Q83.5 69.7 76.8 69.7 H69.9 Z M75 59 V63.5 H76.8 Q78.5 63.5 78.5 61.25 Q78.5 59 76.8 59 Z" fill-rule="evenodd"/><path d="M92.3 53.6 H99 V69.7 H93.8 V69 Q93 69.7 92.3 69.7 Q86 69.7 86 61.65 Q86 53.6 92.3 53.6 Z M92.3 60 Q91 60 91 62 Q91 64 92.3 64 H93.6 V60 Z" fill-rule="evenodd"/><path d="M102.3 69.7 V61 Q102.3 53.6 109 53.6 H110.7 V58.2 H109 Q107 58.2 107 61 V69.7 Z"/><path d="M112 69.7 V61 Q112 53.6 118.3 53.6 H119.8 V58.2 H118.3 Q116.7 58.2 116.7 61 V69.7 Z"/></g><text x="93.2" y="51.8" font-size="7" fill="#505050" font-family="Liberation Sans" textLength="26.6" lengthAdjust="spacingAndGlyphs">ERP/CRM</text></svg>
<svg style="left:150px;top:44px" width="40" height="30" viewBox="150 44 40 30"><defs><linearGradient id="bg1" x1="0" y1="0" x2="0" y2="1"><stop offset="0" stop-color="#2a2a2a"/><stop offset="1" stop-color="#a0a0a0"/></linearGradient><linearGradient id="bg2" x1="0" y1="0" x2="0" y2="1"><stop offset="0" stop-color="#0e0e0e"/><stop offset="1" stop-color="#a0a0a0"/></linearGradient></defs><path d="M159.2 57.05 H169.2 V69.8 H159.2 Z M160 58.6 V60.7 H165 V58.6 Z M163.9 65.4 V69.8 H167.8 V65.4 Z" fill="url(#bg1)" fill-rule="evenodd"/><path d="M171.9 48.7 H182 V69.8 H171.9 Z M173 50.6 V52.9 H178 V50.6 Z M173 54.7 V57 H178 V54.7 Z M173 58.6 V61 H178 V58.6 Z" fill="url(#bg2)" fill-rule="evenodd"/></svg>
<svg style="left:230px;top:78px" width="130" height="14" viewBox="230 78 130 14"><circle cx="237.6" cy="84.3" r="4.3" fill="#fff" stroke="#555" stroke-width="0.9"/><circle cx="237.6" cy="84.3" r="2.2" fill="#111"/><circle cx="349.2" cy="84.4" r="4.3" fill="#fff" stroke="#666" stroke-width="0.9"/></svg>
<svg style="left:428.9px;top:82.3px" width="8" height="9" viewBox="0 0 8 9"><path d="M0.3 0.5 L7.3 0.5 L7.3 7.3 L4.6 7.3 L3.8 8.6 L3 7.3 L0.3 7.3 Z" fill="#b0b0b0"/><text x="3.8" y="6.3" font-size="6.8" font-weight="bold" text-anchor="middle" fill="#e8e8e8" font-family="Liberation Sans">?</text></svg>
<svg style="left:118px;top:492px" width="8" height="7" viewBox="0 0 8 7"><rect x="0.5" y="0.5" width="6.5" height="5.8" fill="#f0f0f0" stroke="#c8c8c8" stroke-width="0.8"/><path d="M2 3.5 H5.5" stroke="#bbb" stroke-width="0.8"/></svg>
</body></html>
